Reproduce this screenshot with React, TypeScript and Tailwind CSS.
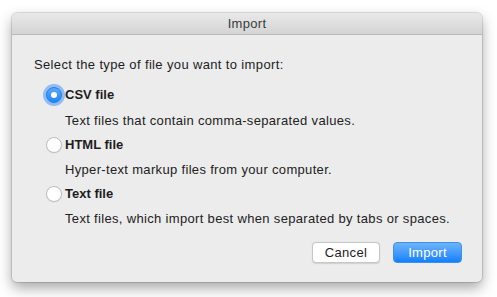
import React from "react";

function Radio({ checked }: { checked?: boolean }) {
  if (checked) {
    return (
      <div className="relative w-[16px] h-[16px] shrink-0">
        <div className="absolute -inset-[3px] rounded-full bg-[#8fbcf4]" />
        <div className="absolute inset-0 rounded-full bg-gradient-to-b from-[#5aa9fb] to-[#1a85fc] border border-[#2b7be0] flex items-center justify-center">
          <div className="w-[6px] h-[6px] rounded-full bg-white" />
        </div>
      </div>
    );
  }
  return (
    <div className="w-[16px] h-[16px] shrink-0 rounded-full bg-white border border-[#bdbdbd] shadow-[0_0.5px_1px_rgba(0,0,0,0.08)]" />
  );
}

function Option({
  label,
  desc,
  checked,
  first,
}: {
  label: string;
  desc: string;
  checked?: boolean;
  first?: boolean;
}) {
  return (
    <div className={first ? "mt-[14px]" : "mt-[8px]"}>
      <div className="flex items-center h-[16px] ml-[12px] gap-[3px]">
        <Radio checked={checked} />
        <span className="font-bold text-[13px] leading-[16px] text-[#1d1d1d]">{label}</span>
      </div>
      <div className={(first ? "mt-[10px]" : "mt-[9px]") + " pl-[31px] text-[13px] leading-[16px] tracking-[0.33px] text-[#222]"}>
        {desc}
      </div>
    </div>
  );
}

export default function App() {
  return (
    <div
      className="w-[497px] h-[297px] bg-white overflow-hidden pt-[13px] pl-[12px]"
      style={{ fontFamily: '"Liberation Sans", Arial, sans-serif' }}
    >
      <div className="w-[470px] h-[269px] rounded-[5px] bg-[#ececec] shadow-[0_6px_14px_rgba(0,0,0,0.35),0_0_0_1px_rgba(0,0,0,0.12)] overflow-hidden flex flex-col">
        <div className="h-[22px] shrink-0 bg-gradient-to-b from-[#e9e9e9] to-[#d4d4d4] border-b border-[#b9b9b9] flex items-center justify-center text-[13px] tracking-[0.3px] text-[#3a3a3a]">
          Import
        </div>
        <div className="flex-1 pt-[22px] pl-[22px] pr-[20px]">
          <div className="text-[13px] leading-[16px] tracking-[0.36px] text-[#1d1d1d]">
            Select the type of file you want to import:
          </div>
          <Option first checked label="CSV file" desc="Text files that contain comma-separated values." />
          <Option label="HTML file" desc="Hyper-text markup files from your computer." />
          <Option label="Text file" desc="Text files, which import best when separated by tabs or spaces." />
          <div className="mt-[15px] flex justify-end gap-[13px] pr-[0px]">
            <button className="w-[68px] h-[21px] rounded-[4px] bg-white border border-[#c6c6c6] shadow-[0_0.5px_1px_rgba(0,0,0,0.12)] text-[13px] tracking-[0.3px] text-[#1d1d1d] leading-none">
              Cancel
            </button>
            <button className="w-[69px] h-[21px] rounded-[4px] bg-gradient-to-b from-[#6cb3fa] to-[#0b80ff] border border-[#3d8ff0] text-[13px] tracking-[0.3px] text-white leading-none">
              Import
            </button>
          </div>
        </div>
      </div>
    </div>
  );
}
